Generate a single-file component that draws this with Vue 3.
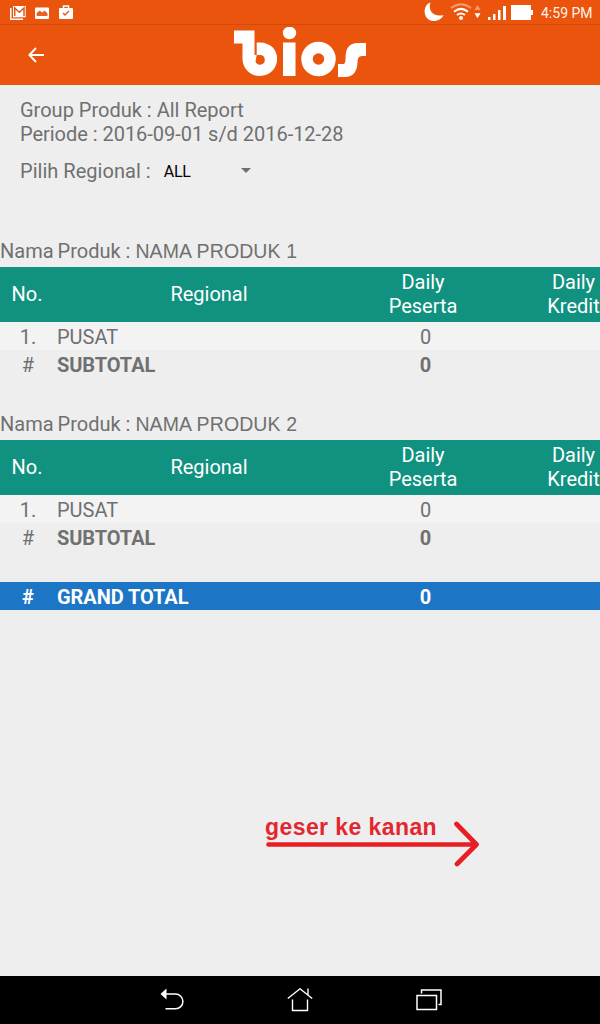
<script setup>
const groups = ['NAMA PRODUK 1', 'NAMA PRODUK 2']
</script>

<template>
  <div class="screen">
    <div class="statusbar">
      <svg class="notifications" width="80" height="24" viewBox="0 0 80 24">
        <path d="M10.8 8V19.2H23" fill="none" stroke="#fff" stroke-width="1.5" />
        <rect x="13" y="6" width="12.7" height="11.3" fill="#fff" />
        <path d="M14.7 16V8l4.7 4.2L24 8v8" fill="none" stroke="#d95a20" stroke-width="1.5" />
        <rect x="35" y="7.5" width="14" height="11.5" rx="1" fill="#fff" />
        <path d="M36.7 16v-3l3-2.5 2.5 2 2.5-2 2.8 3V16z" fill="#e3622b" />
        <rect x="59" y="8" width="14" height="11" rx="1" fill="#fff" />
        <path d="M63.5 8V6h5v2" fill="none" stroke="#fff" stroke-width="1.5" />
        <path d="M63 13l2 2 4-4" fill="none" stroke="#e75a17" stroke-width="1.5" />
      </svg>
      <svg class="signals" width="116" height="24" viewBox="0 0 116 24">
        <path d="M10.500 2.500C2 5 2.500 20.500 13.500 21C18.500 21 22 18.500 23.500 15C14 17.500 7.500 11 10.500 2.500z" fill="#fff" />
        <g fill="none" stroke="#fff" stroke-width="2">
          <path d="M31 8Q41 .5 51 8" stroke="#f69a75" />
          <path d="M34 11.7Q41 6 48 11.7M37 15Q41 12 45 15" />
        </g>
        <circle cx="41" cy="18" r="2" fill="#fff" />
        <path d="M54.5 10L57.5 5l3 5z" fill="#f69a75" />
        <path d="M54.5 13.2h6l-3 5z" fill="#fff" />
        <path d="M68 20v-3h2.5v3zM73 20v-6h2.5v6zM78 20V10h2.5v10zM83 20V6h3v14z" fill="#fff" />
        <path d="M91 5h20v5h2v5h-2v5H91z" fill="#fff" />
      </svg>
      <span class="clock">4:59 PM</span>
    </div>
    <header class="appbar">
      <svg class="back" width="16" height="16" viewBox="0 0 16 16" fill="none" stroke="#fff" stroke-width="1.9">
        <path d="M8 1L1.4 8 8 15M1.4 8H16" />
      </svg>
      <svg class="logo" width="132" height="50" viewBox="0 0 132 50" role="img" aria-label="bios">
        <path d="M0 3.500H20.500V28H22.700V15.500C50 13 49 49 25.500 49A17 17 0 0 1 8.500 32V16.500H0z" fill="#fff" />
        <path d="M22.700 28H26A4.800 4.800 0 1 1 21.500 34.500z" fill="#eb540c" />
        <ellipse cx="55.5" cy="6" rx="6.7" ry="6.2" fill="#fff" />
        <rect x="49" y="15.5" width="12.5" height="33.5" fill="#fff" />
        <circle cx="84.5" cy="32" r="11.5" fill="none" stroke="#fff" stroke-width="11.5" />
        <path d="M104 37H109Q111.500 37 111.500 32C111.500 21 115 16 124 16H132V29H128Q123.500 29 123.500 35C123.500 44 119 50 111 50H104z" fill="#fff" />
      </svg>
    </header>

    <section class="filters">
      <div>Group Produk : All Report</div>
      <div class="period">Periode : 2016-09-01 s/d 2016-12-28</div>
      <div class="region">Pilih Regional :<span class="choice">ALL</span><i class="caret"></i></div>
    </section>

    <section v-for="name in groups" :key="name" class="group">
      <h2>Nama<span class="word">Produk :</span><span class="product">{{ name }}</span></h2>
      <div class="grid head">
        <span>No.</span><span>Regional</span><span>Daily<br>Peserta</span><span>Daily<br>Kredit</span>
      </div>
      <div class="grid row light"><span>1.</span><span>PUSAT</span><span>0</span></div>
      <div class="grid row sub"><span>#</span><b>SUBTOTAL</b><b>0</b></div>
    </section>
    <div class="grid row total"><span>#</span><span>GRAND TOTAL</span><span>0</span></div>

    <div class="hint">
      <span>geser ke kanan</span>
      <svg width="216" height="46" viewBox="0 0 216 46" fill="none" stroke="#e81e25" stroke-width="4.7" stroke-linecap="round" stroke-linejoin="round">
        <path d="M3.500 23.500H211M191.500 3L211.500 23.500L192 43" />
      </svg>
    </div>

    <nav class="navbar">
      <svg width="24" height="24" viewBox="0 0 24 24">
        <path d="M6 6H15.500A7.400 7.400 0 0 1 15.500 20.800H5.500" fill="none" stroke="#fff" stroke-width="1.500" />
        <path d="M.5 6L6.500 .5V11.500z" fill="#fff" />
      </svg>
      <svg width="26" height="24" viewBox="0 0 26 24" fill="none" stroke="#fff" stroke-width="1.400">
        <path d="M.8 10.500L13 .8l12.200 9.700M5.500 11.500V22.500h15V11.500M21 .5V7" />
      </svg>
      <svg width="26" height="22" viewBox="0 0 26 22" fill="none" stroke="#fff" stroke-width="1.500">
        <path d="M1 6.500H20.500V20.500H1zM5.500 4.500V1H25V15.500H22.500" />
      </svg>
    </nav>
  </div>
</template>

<style>
body { margin: 0; }
</style>

<style scoped>
.screen {
  width: 600px; height: 1024px; overflow: hidden; display: flex; flex-direction: column;
  background: #eee; color: #707070; font: 20px/24px Roboto, sans-serif;
}
.screen > * { flex-shrink: 0; }
svg { display: block; flex-shrink: 0; }
.statusbar { height: 24px; background: #eb540c; border-bottom: 1px solid #cf4b0e; display: flex; align-items: center; }
.signals { margin-left: 340px; }
.clock { color: #fff3eb; font-size: 14px; margin-left: 5px; margin-top: 2px; white-space: nowrap; }
.appbar { height: 60px; background: #eb540c; display: flex; }
.back { margin: 22px 0 0 28px; }
.logo { margin: 2px 0 0 190px; }
.filters { height: 141px; box-sizing: border-box; padding: 13px 20px 0; }
.period { letter-spacing: -.03px; }
.region { display: flex; align-items: center; margin-top: 11px; letter-spacing: .03px; }
.choice { color: #000; font-size: 16px; letter-spacing: -.2px; margin-left: 13px; width: 77px; padding-top: 3px; }
.caret { border: 5.5px solid transparent; border-top-color: #707070; border-bottom: 0; }
.group { height: 173px; }
h2 { margin: 0; height: 41px; box-sizing: border-box; padding-top: 13px; font-size: 20px; font-weight: 400; white-space: nowrap; }
.word { margin-left: 4px; }
.product { font: 19.5px "Liberation Sans", sans-serif; letter-spacing: .1px; margin-left: 5px; }
.grid { display: grid; grid-template-columns: 54px 310px 118px 183px; text-align: center; align-items: center; }
.head { height: 55px; padding-bottom: 2px; box-sizing: border-box; background: #119280; color: #fff; }
.row { height: 28px; grid-template-columns: 56px 309px 121px 180px; padding-top: 2px; box-sizing: border-box; }
.row > :nth-child(2) { text-align: left; padding-left: 1px; }
.sub b, .total span { letter-spacing: -.08px; }
.light { background: #f3f3f3; }
.total { margin-top: 10px; background: #1d75c5; color: #fff; font-weight: 700; }
.hint { margin: 205px 0 0 265px; color: #e32630; }
.hint span { display: block; font: 700 23px/24px "Liberation Sans", sans-serif; letter-spacing: .42px; }
.hint svg { margin-top: -18px; }
.navbar { height: 48px; margin-top: auto; padding: 0 158px 0 160px; background: #000; display: flex; align-items: center; justify-content: space-between; }
</style>
